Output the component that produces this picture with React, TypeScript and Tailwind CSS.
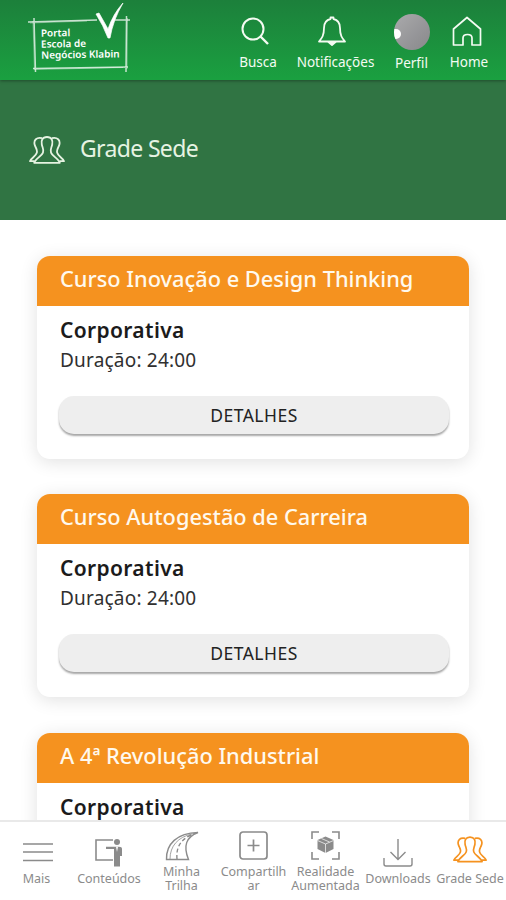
import React from "react";

type TextProps = { children: React.ReactNode; className?: string };

function Line({ children, className = "" }: TextProps) {
  return <span className={`block whitespace-nowrap ${className}`}>{children}</span>;
}

function PeopleIcon({ className = "" }: { className?: string }) {
  return (
    <svg viewBox="0 0 36 28" fill="none" stroke="currentColor" strokeWidth="1.8" strokeLinejoin="round" className={className}>
      <path d="M18 1C13.2 1 12 4.500 12.800 8.500C13.400 11.800 15 13 14 16.500C13 20 6.500 22.500 5.200 26.800H30.800C29.500 22.500 23 20 22 16.500C21 13 22.600 11.800 23.200 8.500C24 4.500 22.800 1 18 1Z" />
      <path d="M13 2.200C7.500 1 4.600 4 5.600 8.500C6.400 12 8.800 13.200 7.800 16.800C6.800 20.600 2.200 21.600 1 25.200H5.600" />
      <path d="M23 2.200C28.500 1 31.400 4 30.400 8.500C29.600 12 27.200 13.200 28.200 16.800C29.200 20.600 33.800 21.600 35 25.200H30.400" />
    </svg>
  );
}

function Logo() {
  return (
    <div className="relative ml-[27px] h-[76px] w-[104px] shrink-0 text-white">
      <svg viewBox="0 0 104 76" fill="none" stroke="currentColor" className="absolute inset-0 h-full w-full">
        <path d="M1 22L70 20M85 20L103 20M7 18L8.500 72M99.500 16L99 72M6 68.500L101 67" strokeWidth="1.500" opacity=".75" />
        <path d="M3 23L60 21M6 21L7.500 70M100.500 18L100 69M8 69.500L96 67.500" strokeWidth=".6" opacity=".6" />
        <path d="M69 14L72 13L81 29Q86 14 96 3Q86 20 83 38H81Q76 25 69 14Z" fill="currentColor" strokeWidth=".7" />
      </svg>
      <div className="absolute left-[14px] top-[27px] -rotate-1 text-[10px] font-semibold leading-[11px]">
        <Line>Portal</Line>
        <Line>Escola de</Line>
        <Line>Negócios Klabin</Line>
      </div>
    </div>
  );
}

function Header() {
  return (
    <header className="relative z-10 flex h-[80px] shrink-0 bg-linear-to-b from-[#1c803b] to-[#1aa040] pr-[17px] text-[#f4fbf2] shadow-[0_1px_3px_rgba(0,0,0,0.35)]">
      <Logo />
      <nav className="ml-auto flex text-[13.500px] leading-[18px]">
        <div className="flex w-[38px] flex-col items-center">
          <svg viewBox="0 0 28 28" fill="none" stroke="currentColor" strokeWidth="2" className="mt-[17px] mr-[5px] size-[28px] shrink-0">
            <circle cx="12" cy="12" r="10.500" />
            <path d="M19.500 19.500L27 27" strokeWidth="2.400" />
          </svg>
          <Line className="ml-[2px] mt-[8px]">Busca</Line>
        </div>
        <div className="ml-[19px] flex w-[79px] flex-col items-center">
          <svg viewBox="0 0 30 30" fill="none" stroke="currentColor" strokeWidth="1.800" strokeLinejoin="round" className="mt-[16px] mr-[6px] size-[30px] shrink-0">
            <path d="M13.500 3V1.500H16.500V3C21 4 23 7.500 23 12C23 19.500 25 22 28 25.500H2C5 22 7 19.500 7 12C7 7.500 9 4 13.500 3Z" />
            <path d="M11.500 26L15 29L18.500 26Z" fill="currentColor" />
          </svg>
          <Line className="ml-[2px] mt-[7px]">Notificações</Line>
        </div>
        <div className="ml-[21px] flex w-[33px] flex-col items-center">
          <div className="mt-[14px] size-[36px] shrink-0 overflow-hidden rounded-full bg-linear-to-br from-[#aaaaac] to-[#88888b]">
            <div className="mt-[15px] h-[10px] w-[7px] rounded-r-md bg-white blur-[0.5px]" />
          </div>
          <Line className="mt-[4px]">Perfil</Line>
        </div>
        <div className="ml-[21px] flex w-[40px] flex-col items-center">
          <svg viewBox="0 0 30 30" fill="none" stroke="currentColor" strokeWidth="1.700" strokeLinejoin="round" className="mt-[16px] mr-[5px] size-[30px] shrink-0">
            <path d="M1.500 13L15 1.500L28.500 13V29H20V22C20 19.500 18 18.500 15.500 18.500S11 19.500 11 22V29H1.500Z" />
          </svg>
          <Line className="mt-[7px]">Home</Line>
        </div>
      </nav>
    </header>
  );
}

function CourseCard({ title }: { title: string }) {
  return (
    <article className="h-[203px] shrink-0 overflow-hidden rounded-[13px] bg-white shadow-[0_3px_18px_rgba(0,0,0,0.12)]">
      <h2 className="flex h-[50px] items-center bg-[#f5921f] pb-[3px] pl-[23px] text-[21.800px] font-medium text-[#fff9ed]">
        <Line>{title}</Line>
      </h2>
      <div className="px-[22px] pt-[9px]">
        <Line className="pl-px text-[21px] font-semibold leading-[30px] tracking-[0.35px] text-[#1b1b1b]">Corporativa</Line>
        <Line className="pl-px text-[19px] leading-[31px] tracking-[0.2px] text-[#303030]">Duração: 24:00</Line>
        <button className="mt-[20px] flex h-[38px] w-[390px] items-center justify-center rounded-[15px] bg-[#eee] text-[17.500px] tracking-[0.5px] text-[#222] shadow-[0_2px_2px_rgba(0,0,0,0.35)]">
          <Line>DETALHES</Line>
        </button>
      </div>
    </article>
  );
}

function BottomNav() {
  return (
    <nav className="flex h-[80px] shrink-0 border-t-2 border-[#e9e9e9] bg-white text-center text-[12.500px] leading-[14px] text-[#8b8b8b]">
      <div className="flex w-[73px] flex-col items-center pt-[20px]">
        <svg viewBox="0 0 30 20" stroke="currentColor" strokeWidth="1.700" className="ml-[2px] h-[20px] w-[30px]"><path d="M0 2H30M0 10H30M0 18.500H30" /></svg>
        <Line className="mt-[10px]">Mais</Line>
      </div>
      <div className="flex w-[72px] flex-col items-center pt-[16px]">
        <svg viewBox="0 0 28 29" fill="none" stroke="currentColor" strokeWidth="1.600" className="h-[29px] w-[28px]">
          <path d="M18 2H1V22H18" />
          <circle cx="22" cy="4" r="3" fill="currentColor" stroke="none" />
          <path d="M11 8.800H24Q27 8.800 27 11V18H25V28.500H19V11H11Z" fill="currentColor" stroke="none" />
          <path d="M21 8.800L22 14L23 8.800Z" fill="white" stroke="none" />
        </svg>
        <Line className="mt-[5px]">Conteúdos</Line>
      </div>
      <div className="flex w-[73px] flex-col items-center pt-[9px]">
        <svg viewBox="0 0 34 30" fill="none" stroke="currentColor" strokeWidth="1.400" className="h-[30px] w-[34px]">
          <path d="M1.500 28.500C1 13 12 2 33 1.500C21 6 18 15 23.500 28.500Z" />
          <path d="M27 3C13 6 5 15 5 28" strokeWidth=".8" />
          <path d="M26 4C15 9 11 17 12 28" strokeDasharray="4 2.500" />
        </svg>
        <Line className="mt-[4px]">Minha</Line><Line>Trilha</Line>
      </div>
      <div className="flex w-[71px] flex-col items-center pt-[9px]">
        <svg viewBox="0 0 29 29" fill="none" stroke="currentColor" strokeWidth="1.700" className="size-[29px]">
          <rect x="1" y="1" width="27" height="27" rx="3" />
          <path d="M14.500 8.500V20.500M8.500 14.500H20.500" />
        </svg>
        <Line className="mt-[5px]">Compartilh</Line><Line>ar</Line>
      </div>
      <div className="flex w-[73px] flex-col items-center pt-[9px]">
        <svg viewBox="0 0 29 29" fill="none" stroke="currentColor" strokeWidth="1.600" className="size-[29px]">
          <path d="M1 8V1H8M21 1H28V8M28 21V28H21M8 28H1V21" />
          <path d="M14.500 5.500L22.500 9V18L14.500 22L6.500 18V9Z" fill="currentColor" stroke="none" />
          <path d="M6.500 9.500L14.500 13L22.500 9.500M14.500 13V22M10.500 7.500L18.500 11" stroke="white" strokeWidth=".7" />
        </svg>
        <Line className="mt-[5px]">Realidade</Line><Line>Aumentada</Line>
      </div>
      <div className="flex w-[72px] flex-col items-center pt-[16px]">
        <svg viewBox="0 0 30 29" fill="none" stroke="currentColor" strokeWidth="1.400" className="h-[29px] w-[30px]">
          <path d="M15 1V21.500M7.500 14L15 21.500L22.500 14M1 20V26Q1 28 3 28H27Q29 28 29 26V20" />
        </svg>
        <Line className="mt-[5px]">Downloads</Line>
      </div>
      <div className="flex w-[72px] flex-col items-center pt-[14px]">
        <PeopleIcon className="h-[27px] w-[34px] text-[#f5921f]" />
        <Line className="mt-[9px]">Grade Sede</Line>
      </div>
    </nav>
  );
}

export default function App() {
  return (
    <div className="flex h-[900px] w-[506px] flex-col overflow-hidden bg-white font-['Noto_Sans',sans-serif]">
      <Header />
      <section className="flex h-[140px] shrink-0 items-center bg-[#307443] pl-[29px] text-[#e6f3e2]">
        <PeopleIcon className="h-[28px] w-[36px]" />
        <h1 className="ml-[15px] pb-[4px] text-[23px] tracking-[-0.65px]"><Line>Grade Sede</Line></h1>
      </section>
      <main className="flex min-h-0 flex-1 flex-col gap-[35.300px] overflow-hidden px-[37px] pt-[36px]">
        <CourseCard title="Curso Inovação e Design Thinking" />
        <CourseCard title="Curso Autogestão de Carreira" />
        <CourseCard title="A 4ª Revolução Industrial" />
      </main>
      <BottomNav />
    </div>
  );
}
